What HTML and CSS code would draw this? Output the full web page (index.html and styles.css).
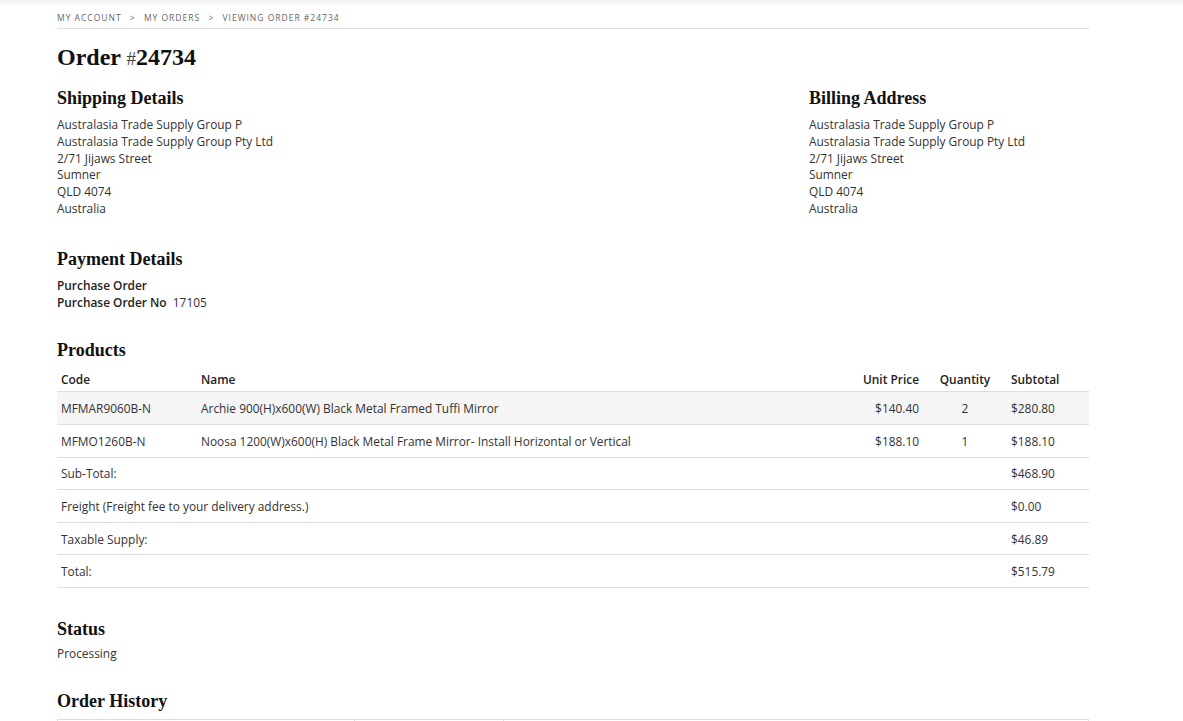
FILE: index.html
```html
<!DOCTYPE html>
<html lang="en">
<head>
    <meta charset="UTF-8">
    <meta name="viewport" content="width=device-width, initial-scale=1.0">
    <title>Viewing Order #24734</title>
    <link rel="stylesheet" href="styles.css">
</head>
<body>
    <div class="header-shadow"></div>
    <div class="page">
        <!-- Breadcrumb -->
        <nav class="breadcrumb">
            <a href="#">My Account</a>
            <span class="sep">&gt;</span>
            <a href="#">My Orders</a>
            <span class="sep">&gt;</span>
            <span>Viewing Order #24734</span>
        </nav>

        <h1 class="order-title">Order <span class="hash">#</span>24734</h1>

        <div class="addresses">
            <div class="address">
                <h2>Shipping Details</h2>
                <p>Australasia Trade Supply Group P<br>
                Australasia Trade Supply Group Pty Ltd<br>
                2/71 Jijaws Street<br>
                Sumner<br>
                QLD 4074<br>
                Australia</p>
            </div>
            <div class="address">
                <h2>Billing Address</h2>
                <p>Australasia Trade Supply Group P<br>
                Australasia Trade Supply Group Pty Ltd<br>
                2/71 Jijaws Street<br>
                Sumner<br>
                QLD 4074<br>
                Australia</p>
            </div>
        </div>

        <div class="payment">
            <h2>Payment Details</h2>
            <p><strong>Purchase Order</strong><br>
            <strong>Purchase Order No</strong>&nbsp; 17105</p>
        </div>

        <div class="products">
            <h2>Products</h2>
            <table class="order-table">
                <thead>
                    <tr>
                        <th class="col-code">Code</th>
                        <th>Name</th>
                        <th class="col-price">Unit Price</th>
                        <th class="col-qty">Quantity</th>
                        <th class="col-sub">Subtotal</th>
                    </tr>
                </thead>
                <tbody>
                    <tr class="striped">
                        <td>MFMAR9060B-N</td>
                        <td>Archie 900(H)x600(W) Black Metal Framed Tuffi Mirror</td>
                        <td class="col-price">$140.40</td>
                        <td class="col-qty">2</td>
                        <td>$280.80</td>
                    </tr>
                    <tr>
                        <td>MFMO1260B-N</td>
                        <td>Noosa 1200(W)x600(H) Black Metal Frame Mirror- Install Horizontal or Vertical</td>
                        <td class="col-price">$188.10</td>
                        <td class="col-qty">1</td>
                        <td>$188.10</td>
                    </tr>
                    <tr>
                        <td colspan="4">Sub-Total:</td>
                        <td>$468.90</td>
                    </tr>
                    <tr>
                        <td colspan="4">Freight (Freight fee to your delivery address.)</td>
                        <td>$0.00</td>
                    </tr>
                    <tr>
                        <td colspan="4">Taxable Supply:</td>
                        <td>$46.89</td>
                    </tr>
                    <tr>
                        <td colspan="4">Total:</td>
                        <td>$515.79</td>
                    </tr>
                </tbody>
            </table>
        </div>

        <div class="status">
            <h2>Status</h2>
            <p>Processing</p>
        </div>

        <div class="history">
            <h2>Order History</h2>
            <table class="history-table">
                <tr>
                    <td class="h-date"></td>
                    <td class="h-status"></td>
                    <td></td>
                </tr>
            </table>
        </div>
    </div>
</body>
</html>
```

FILE: styles.css
```css
body {
    margin: 0;
    background: #fff;
    color: #333;
    font-family: "Open Sans", Arial, sans-serif;
    font-size: 11.9px;
}

.header-shadow {
    height: 6px;
    background: linear-gradient(to bottom, #f0f0f0, #fff);
}

.page {
    width: 1032px;
    margin-left: 57px;
}

h1, h2 {
    font-family: "Liberation Serif", "Times New Roman", serif;
    font-weight: bold;
    color: #111;
    margin: 0;
}

p {
    margin: 0;
    line-height: 16.8px;
}

.breadcrumb {
    padding: 6px 0 5px;
    border-bottom: 1px solid #ddd;
    font-size: 8.5px;
    letter-spacing: 1px;
    text-transform: uppercase;
    color: #666;
    line-height: 11px;
}

.breadcrumb a {
    color: #666;
    text-decoration: none;
}

.breadcrumb .sep {
    margin: 0 5px;
}

.order-title {
    font-size: 24px;
    margin-top: 13px;
    line-height: 30px;
}

.order-title .hash {
    font-weight: normal;
    font-size: 19px;
    color: #444;
}

h2 {
    font-size: 18px;
    line-height: 22px;
    margin-bottom: 7px;
}

.addresses {
    display: grid;
    grid-template-columns: 752px 1fr;
    margin-top: 13px;
}

.payment {
    margin-top: 31px;
}

.payment strong {
    font-weight: 600;
    color: #222;
}

.products {
    margin-top: 29px;
}

.order-table {
    width: 100%;
    border-collapse: collapse;
}

.order-table th {
    text-align: left;
    font-weight: 600;
    color: #222;
    line-height: 16px;
    padding: 3px 4px 4px;
    border-bottom: 1px solid #ddd;
}

.order-table td {
    padding: 0 4px;
    height: 31.6px;
    border-bottom: 1px solid #ddd;
}

.order-table .striped td {
    background: #f5f5f5;
}

.order-table .col-code {
    width: 132px;
}

.order-table .col-price {
    text-align: right;
    width: 80px;
}

.order-table .col-qty {
    text-align: center;
    width: 76px;
}

.order-table .col-sub {
    width: 74px;
}

.status {
    margin-top: 30px;
}

.status p {
    margin-top: -2px;
}

.history {
    margin-top: 28px;
}

.history-table {
    width: 100%;
    border-collapse: collapse;
}

.history-table td {
    border: 1px solid #ddd;
    height: 30px;
    padding: 0 4px;
}

.history-table .h-date {
    width: 288px;
}

.history-table .h-status {
    width: 140px;
}
```
